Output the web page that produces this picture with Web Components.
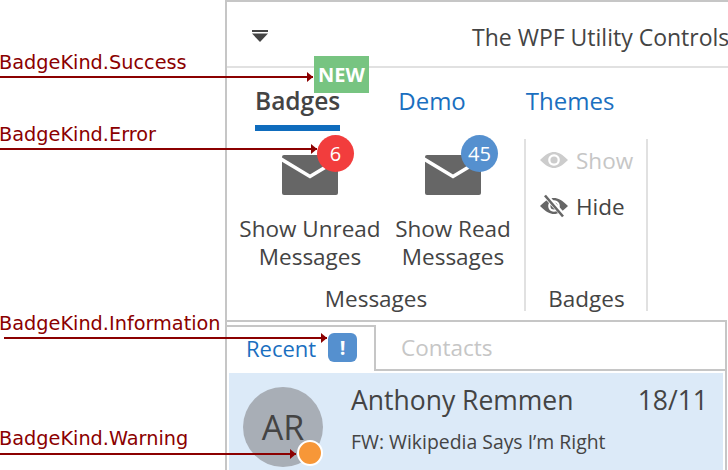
<!DOCTYPE html>
<html>
<head>
<meta charset="utf-8">
<style>
  html, body { margin: 0; padding: 0; background: #fff; }
  body { width: 728px; height: 470px; overflow: hidden; position: relative; font-family: "Open Sans", sans-serif; color: #444; }
</style>
</head>
<body>
<demo-window>
  <title-bar>The WPF Utility Controls</title-bar>
  <ribbon-tabs>
    <ribbon-tab active>Badges</ribbon-tab>
    <ribbon-tab style="margin-left:58px">Demo</ribbon-tab>
    <ribbon-tab style="margin-left:60px">Themes</ribbon-tab>
  </ribbon-tabs>
  <ribbon-body>
    <ribbon-group label="Messages" style="width:297px">
      <big-button count="6" kind="error" offset="7" style="width:158px">Show Unread<br>Messages</big-button>
      <big-button count="45" kind="info" offset="8" style="width:128px">Show Read<br>Messages</big-button>
    </ribbon-group>
    <ribbon-group label="Badges" divided style="width:124px">
      <small-buttons>
        <small-button icon="eye" disabled>Show</small-button>
        <small-button icon="eye-off">Hide</small-button>
      </small-buttons>
    </ribbon-group>
  </ribbon-body>
  <tab-panel>
    <tab-strip></tab-strip>
    <list-row name="Anthony Remmen" date="18/11" subject="FW: Wikipedia Says I’m Right" initials="AR"></list-row>
  </tab-panel>
</demo-window>

<new-badge>NEW</new-badge>

<call-out text="BadgeKind.Success" top="51" line="76" from="0" to="313"></call-out>
<call-out text="BadgeKind.Error" top="123" line="148" from="0" to="317"></call-out>
<call-out text="BadgeKind.Information" top="312" line="337" from="4" to="327"></call-out>
<call-out text="BadgeKind.Warning" top="427" line="453" from="0" to="296"></call-out>

<script>
// Small helper, every element is just a shadow root with its own style and markup
function define(name, html, setup) {
  const template = document.createElement('template')
  template.innerHTML = html
  customElements.define(name, class extends HTMLElement {
    constructor() {
      super()
      this.attachShadow({mode: 'open'})
      this.shadowRoot.appendChild(template.content.cloneNode(true))
    }
    connectedCallback() {
      if (setup) setup(this, this.shadowRoot)
    }
  })
}

define('demo-window', `
  <style>
    :host { display: flex; flex-direction: column; margin-left: 225px; width: 503px; height: 470px;
            box-sizing: border-box; border-left: 2px solid #c6c6c6; border-top: 2px solid #c6c6c6; }
  </style>
  <slot></slot>`)

define('title-bar', `
  <style>
    :host { display: flex; align-items: flex-start; height: 66px; box-sizing: border-box; flex: none;
            border-bottom: 2px solid #e1e1e1; padding-left: 25px; white-space: nowrap; overflow: hidden; }
    svg { flex: none; margin-top: 28px; }
    span { margin-left: 203px; margin-top: 20px; font-size: 23px; line-height: 30px; color: #444; }
  </style>
  <svg width="17" height="13" viewBox="0 0 17 13"><rect x="0" y="0" width="16" height="2" fill="#444"/><path d="M0 3.5h16l-8 8.5z" fill="#444"/></svg>
  <span><slot></slot></span>`)

define('ribbon-tabs', `
  <style>
    :host { display: flex; flex: none; height: 63px; padding-left: 28px; box-sizing: border-box; }
  </style>
  <slot></slot>`)

define('ribbon-tab', `
  <style>
    :host { display: block; height: 63px; box-sizing: border-box; padding-top: 16px; font-size: 24px; line-height: 34px; color: #1a6fc0; }
    :host([active]) { color: #444; font-weight: 600; font-size: 24.5px; border-bottom: 6px solid #0f6cbd; }
  </style>
  <slot></slot>`)

define('ribbon-body', `
  <style>
    :host { display: flex; flex: none; height: 191px; box-sizing: border-box; margin-right: 1px; border-bottom: 2px solid #c6c6c6; }
  </style>
  <slot></slot>`)

define('ribbon-group', `
  <style>
    :host { display: flex; flex-direction: column; box-sizing: border-box; height: 172px; margin-top: 8px; }
    :host([divided]) { border-left: 2px solid #e1e1e1; border-right: 2px solid #e1e1e1; }
    .items { flex: 1; display: flex; padding-left: 4px; }
    .label { text-align: center; font-size: 22.5px; line-height: 30px; height: 27px; padding-left: 1px; }
  </style>
  <div class="items"><slot></slot></div>
  <div class="label"></div>`, (el, root) => {
    root.querySelector('.label').textContent = el.getAttribute('label')
  })

define('big-button', `
  <style>
    :host { display: block; position: relative; text-align: center; font-size: 22.5px; line-height: 28px; padding-top: 16px; box-sizing: border-box; }
    svg { display: block; margin: 0 auto 20px; }
    .count { position: absolute; top: -4px; width: 37px; height: 37px; border-radius: 50%; color: #fff;
             font-size: 20px; line-height: 37px; text-align: center; }
    .error { background: #f23d3d; }
    .info { background: #5590cf; }
  </style>
  <svg width="56" height="40" viewBox="0 0 56 40">
    <rect width="56" height="40" rx="2" fill="#666"/>
    <path d="M-1 4 L28 21.5 L57 4" fill="none" stroke="#fff" stroke-width="3.5"/>
  </svg>
  <slot></slot>
  <div class="count"></div>`, (el, root) => {
    const count = root.querySelector('.count')
    count.textContent = el.getAttribute('count')
    count.classList.add(el.getAttribute('kind'))
    count.style.left = `calc(50% + ${el.getAttribute('offset')}px)`
  })

define('small-buttons', `
  <style>
    :host { display: flex; flex-direction: column; padding: 3px 0 0 10px; gap: 10px; }
  </style>
  <slot></slot>`)

const almond = '<path d="M0 8 C6 2 10 0 14 0 C18 0 22 2 28 8 C22 14 18 16 14 16 C10 16 6 14 0 8 Z M14 2.2 a5.8 5.8 0 1 0 0.01 0 Z" fill-rule="evenodd"/><circle cx="14" cy="8" r="3.6"/>'
const eyePaths = {
  'eye': almond,
  'eye-off': almond + '<path d="M6 -2 L24 18" stroke="#fff" stroke-width="5"/><path d="M5 -2.5 L23 18.5" stroke="#666" stroke-width="2.6"/>'
}

define('small-button', `
  <style>
    :host { display: flex; align-items: center; gap: 8px; height: 36px; font-size: 22.5px; color: #444; }
    :host([disabled]) { color: #c6c6c6; }
    svg { flex: none; fill: #666; overflow: visible; }
    :host([disabled]) svg { fill: #ccc; }
  </style>
  <svg width="28" height="16" viewBox="0 0 28 16"></svg>
  <slot></slot>`, (el, root) => {
    root.querySelector('svg').innerHTML = eyePaths[el.getAttribute('icon')]
  })

define('tab-panel', `
  <style>
    :host { display: block; flex: 1; margin-right: 1px; border-right: 2px solid #c6c6c6; }
  </style>
  <slot></slot>`)

define('tab-strip', `
  <style>
    :host { display: flex; align-items: flex-end; height: 49px; font-size: 22.5px; }
    .active { display: flex; align-items: center; flex: none; width: 149px; height: 46px; box-sizing: border-box; padding: 0 0 2px 19px;
              border-top: 2px solid #c6c6c6; border-right: 2px solid #c6c6c6; color: #1a6fc0; font-size: 22px; }
    .info { margin: 0 0 2px 12px; width: 29px; height: 29px; border-radius: 6px; background: #5590cf; color: #fff;
            font-size: 20px; font-weight: 700; line-height: 29px; text-align: center; }
    .rest { flex: 1; display: flex; align-items: center; height: 49px; box-sizing: border-box; padding: 4px 0 0 25px;
            color: #c6c6c6; border-bottom: 2px solid #c6c6c6; }
  </style>
  <div class="active">Recent<div class="info">!</div></div>
  <div class="rest">Contacts</div>`)

define('list-row', `
  <style>
    :host { display: flex; height: 97px; box-sizing: border-box; margin: 2px 2px 0 2px; background: #dceaf8; padding: 14px 0 0 14px; }
    .avatar { position: relative; flex: none; width: 80px; height: 80px; border-radius: 50%; background: #a8aeb6;
              font-size: 34px; line-height: 80px; text-align: center; color: #444; }
    .dot { position: absolute; left: 54px; top: 53px; width: 26px; height: 26px; box-sizing: border-box;
           border-radius: 50%; background: #f79738; border: 2px solid #fff; }
    .text { flex: 1; margin-left: 28px; margin-top: -1px; }
    .top { display: flex; justify-content: space-between; font-size: 26.5px; line-height: 28px; margin-right: 15px; }
    .subject { font-size: 19.4px; line-height: 26px; margin-top: 15px; }
  </style>
  <div class="avatar"><span class="initials"></span><div class="dot"></div></div>
  <div class="text">
    <div class="top"><span class="name"></span><span class="date"></span></div>
    <div class="subject"></div>
  </div>`, (el, root) => {
    root.querySelector('.initials').textContent = el.getAttribute('initials')
    root.querySelector('.name').textContent = el.getAttribute('name')
    root.querySelector('.date').textContent = el.getAttribute('date')
    root.querySelector('.subject').textContent = el.getAttribute('subject')
  })

// Success badge sits over the ribbon tab, outside the flow
define('new-badge', `
  <style>
    :host { position: absolute; left: 314px; top: 56px; width: 55px; height: 37px; background: #77c481; color: #fff;
            font-size: 20px; font-weight: 700; line-height: 37px; text-align: center; }
  </style>
  <slot></slot>`)

define('call-out', `
  <style>
    :host { display: block; position: absolute; left: 0; top: 0; color: #8b0000; }
    .text { position: absolute; left: -1px; font-family: "DejaVu Sans", sans-serif; font-size: 19.3px; line-height: 24px; white-space: nowrap; }
    svg { position: absolute; left: 0; top: 0; overflow: visible; }
  </style>
  <div class="text"></div>
  <svg width="728" height="470" viewBox="0 0 728 470"></svg>`, (el, root) => {
    const text = root.querySelector('.text')
    text.textContent = el.getAttribute('text')
    text.style.top = el.getAttribute('top') + 'px'
    const y = +el.getAttribute('line'), x1 = +el.getAttribute('from'), x2 = +el.getAttribute('to')
    root.querySelector('svg').innerHTML =
      `<rect x="${x1}" y="${y}" width="${x2 - x1}" height="2" fill="#8b0000"/>` +
      `<path d="M${x2 - 6} ${y - 4} L${x2} ${y + 1} L${x2 - 6} ${y + 6} Z" fill="#8b0000"/>`
  })
</script>
</body>
</html>
